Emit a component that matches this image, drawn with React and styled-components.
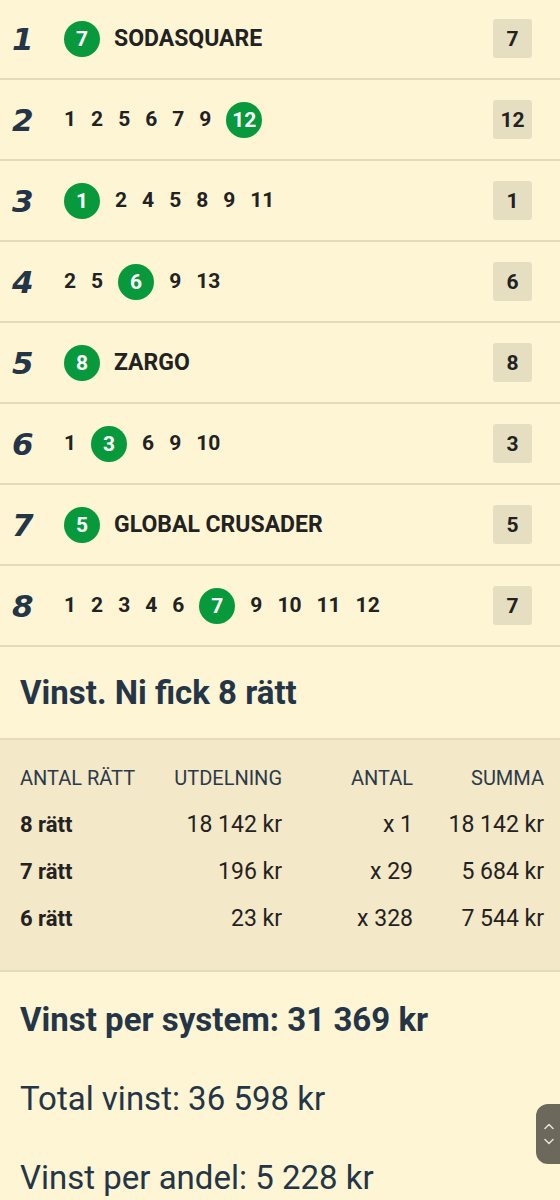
import React from "react";
import styled, { createGlobalStyle } from "styled-components";

const GlobalStyle = createGlobalStyle`
  html, body {
    margin: 0;
    padding: 0;
    background: #fdf5d4;
  }
  body {
    font-family: Roboto, "Liberation Sans", sans-serif;
    color: #222;
  }
`;

const rows = [
  { nr: 1, picks: [7], winner: 7, name: "SODASQUARE" },
  { nr: 2, picks: [1, 2, 5, 6, 7, 9, 12], winner: 12 },
  { nr: 3, picks: [1, 2, 4, 5, 8, 9, 11], winner: 1 },
  { nr: 4, picks: [2, 5, 6, 9, 13], winner: 6 },
  { nr: 5, picks: [8], winner: 8, name: "ZARGO" },
  { nr: 6, picks: [1, 3, 6, 9, 10], winner: 3 },
  { nr: 7, picks: [5], winner: 5, name: "GLOBAL CRUSADER" },
  { nr: 8, picks: [1, 2, 3, 4, 6, 7, 9, 10, 11, 12], winner: 7 },
];

const payouts = [
  { label: "8 rätt", each: "18 142 kr", count: "x 1", sum: "18 142 kr" },
  { label: "7 rätt", each: "196 kr", count: "x 29", sum: "5 684 kr" },
  { label: "6 rätt", each: "23 kr", count: "x 328", sum: "7 544 kr" },
];

const Page = styled.div`
  position: relative;
  min-height: 1200px;
  overflow: hidden;
`;

//Race list
const List = styled.div`
  margin-top: -1px;
`;

const Row = styled.div`
  display: flex;
  align-items: center;
  height: 79px;
  border-bottom: 2px solid #e4dbb9;
  padding: 0 28px 0 12px;
`;

const RaceNr = styled.div`
  width: 52px;
  font-family: "DejaVu Sans", Roboto, sans-serif;
  font-size: 31px;
  font-weight: 700;
  font-style: italic;
  color: #243548;
  line-height: 1;
  margin-top: 2px;
`;

const Picks = styled.div`
  flex: 1;
  display: flex;
  align-items: center;
  gap: 15px;
`;

const Pick = styled.span`
  font-size: 21px;
  font-weight: 700;
  color: #222;
  line-height: 1;
`;

const Winner = styled.span`
  display: inline-flex;
  align-items: center;
  justify-content: center;
  width: 36px;
  height: 36px;
  border-radius: 50%;
  background: #07993b;
  color: #fff;
  font-size: 21px;
  font-weight: 700;
`;

const HorseName = styled.span`
  font-size: 23px;
  font-weight: 700;
  color: #222;
  margin-left: -1px;
`;

const Badge = styled.div`
  width: 39px;
  height: 39px;
  border-radius: 3px;
  background: #e6dec0;
  display: flex;
  align-items: center;
  justify-content: center;
  font-size: 21px;
  font-weight: 700;
  color: #222;
`;

//Result
const Heading = styled.h2`
  margin: 0;
  padding: 28px 20px 28px;
  font-size: 33px;
  line-height: 35px;
  font-weight: 700;
  color: #243548;
  border-bottom: 2px solid #e4dbb9;
`;

const TableBox = styled.div`
  background: #f3e8c7;
  padding: 14px 16px 28px 20px;
  border-bottom: 2px solid #e4dbb9;
`;

const TableRow = styled.div`
  display: grid;
  grid-template-columns: 130px 132px 131px 1fr;
  align-items: center;
  height: 47px;
  font-size: ${({ head }) => (head ? "20px" : "23px")};
  color: ${({ head }) => (head ? "#2b3a4a" : "#222")};
`;

const Cell = styled.div`
  text-align: ${({ right }) => (right ? "right" : "left")};
  font-weight: ${({ bold }) => (bold ? 700 : 400)};
  font-size: ${({ bold }) => (bold ? "22px" : "inherit")};
  white-space: nowrap;
`;

const Summary = styled.div`
  padding: 8px 20px 0;
  display: flex;
  flex-direction: column;
`;

const SummaryLine = styled.div`
  height: 79px;
  display: flex;
  align-items: center;
  font-size: 33px;
  font-weight: ${({ bold }) => (bold ? 700 : 400)};
  color: #243548;
  white-space: nowrap;
`;

//Scroll handle (overlay)
const ScrollHandle = styled.div`
  position: absolute;
  left: 536px;
  top: 1104px;
  width: 40px;
  height: 60px;
  border-radius: 12px;
  background: #6c695c;
  display: flex;
  flex-direction: column;
  align-items: flex-start;
  justify-content: center;
  gap: 8px;
  padding-left: 8px;
  box-sizing: border-box;
`;

const Chevron = ({ down }) => (
  <svg width="10" height="7" viewBox="0 0 10 7">
    <path
      d={down ? "M1 1.5 L5 5.5 L9 1.5" : "M1 5.5 L5 1.5 L9 5.5"}
      fill="none"
      stroke="#e8e4d4"
      strokeWidth="1.5"
      strokeLinecap="round"
      strokeLinejoin="round"
    />
  </svg>
);

const Picked = ({ row }) => {
  if (row.name) {
    return (
      <Picks>
        <Winner>{row.winner}</Winner>
        <HorseName>{row.name}</HorseName>
      </Picks>
    );
  }
  return (
    <Picks>
      {row.picks.map((p) =>
        p === row.winner ? (
          <Winner key={p}>{p}</Winner>
        ) : (
          <Pick key={p}>{p}</Pick>
        )
      )}
    </Picks>
  );
};

export default function App() {
  return (
    <Page>
      <GlobalStyle />
      <List>
        {rows.map((row) => (
          <Row key={row.nr}>
            <RaceNr>{row.nr}</RaceNr>
            <Picked row={row} />
            <Badge>{row.winner}</Badge>
          </Row>
        ))}
      </List>

      <Heading>Vinst. Ni fick 8 rätt</Heading>

      <TableBox>
        <TableRow head>
          <Cell>ANTAL RÄTT</Cell>
          <Cell right>UTDELNING</Cell>
          <Cell right>ANTAL</Cell>
          <Cell right>SUMMA</Cell>
        </TableRow>
        {payouts.map((p) => (
          <TableRow key={p.label}>
            <Cell bold>{p.label}</Cell>
            <Cell right>{p.each}</Cell>
            <Cell right>{p.count}</Cell>
            <Cell right>{p.sum}</Cell>
          </TableRow>
        ))}
      </TableBox>

      <Summary>
        <SummaryLine bold>Vinst per system: 31 369 kr</SummaryLine>
        <SummaryLine>Total vinst: 36 598 kr</SummaryLine>
        <SummaryLine>Vinst per andel: 5 228 kr</SummaryLine>
      </Summary>

      <ScrollHandle>
        <Chevron />
        <Chevron down />
      </ScrollHandle>
    </Page>
  );
}
